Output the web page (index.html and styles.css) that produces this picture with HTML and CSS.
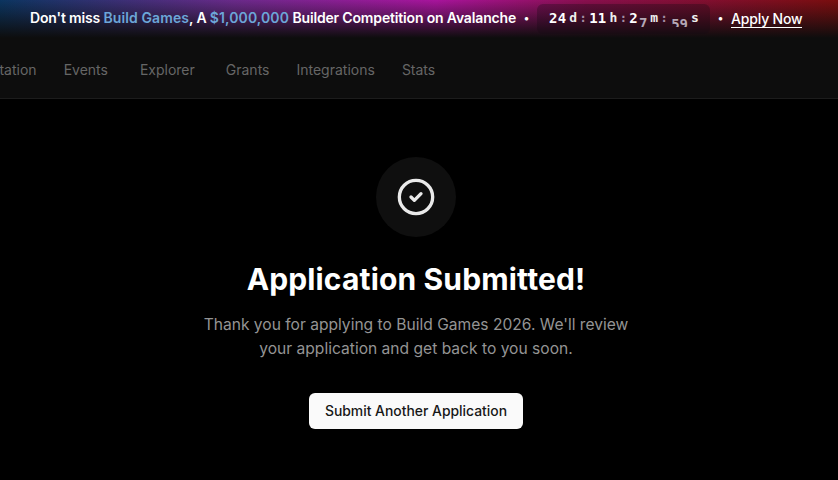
FILE: index.html
```html
<!DOCTYPE html>
<html lang="en">
<head>
<meta charset="utf-8">
<title>Application Submitted</title>
<link rel="stylesheet" href="styles.css">
</head>
<body>
<div class="banner">
  <span class="banner-text">Don't miss <b class="hl">Build Games</b>, A <b class="hl">$1,000,000</b> Builder Competition on Avalanche</span>
  <span class="dot">•</span>
  <div class="timer">
    <span class="num">24</span><span class="unit">d</span><span class="sep">:</span>
    <span class="num">11</span><span class="unit">h</span><span class="sep">:</span>
    <span class="num">2</span><span class="roll roll-one"><span class="roll-digits">7</span></span><span class="unit">m</span><span class="sep">:</span>
    <span class="roll roll-two"><span class="roll-digits">59</span></span><span class="unit">s</span>
  </div>
  <span class="dot">•</span>
  <a class="apply">Apply Now</a>
</div>
<nav class="nav">
  <a class="nav-item first">Documentation</a>
  <a class="nav-item events">Events</a>
  <a class="nav-item explorer">Explorer</a>
  <a class="nav-item grants">Grants</a>
  <a class="nav-item integrations">Integrations</a>
  <a class="nav-item stats">Stats</a>
</nav>
<main class="main">
  <div class="badge">
    <svg class="check" width="40" height="40" viewBox="0 0 24 24" fill="none" stroke="#eaeaea" stroke-width="2" stroke-linecap="round" stroke-linejoin="round">
      <circle cx="12" cy="12" r="10"/>
      <path d="m9 12 2 2 4-4"/>
    </svg>
  </div>
  <h1 class="title">Application Submitted!</h1>
  <p class="desc">Thank you for applying to Build Games 2026. We'll review your application and get back to you soon.</p>
  <button class="btn">Submit Another Application</button>
</main>
</body>
</html>
```
FILE: styles.css
```css
* { box-sizing: border-box; }
html, body { margin: 0; height: 100%; overflow: hidden; }
body { background: #000; color: #fafafa; font-family: Inter, "Liberation Sans", sans-serif; }

.banner {
  height: 40px;
  display: flex;
  align-items: flex-start;
  padding: 4px 0 0 30px;
  background:
    linear-gradient(180deg, rgba(13,13,13,0) 0%, rgba(13,13,13,.3) 30%, #0d0d0d 95%),
    linear-gradient(90deg, #0b3560 0%, #6a2a8a 28%, #a8149c 52%, #8a0f4e 70%, #7a0e0e 100%);
  font-size: 14px;
  font-weight: 600;
  color: #fff;
  white-space: nowrap;
}
.banner-text { line-height: 28px; letter-spacing: -.16px; }
.hl { font-weight: 600; color: #6ca6d8; letter-spacing: .1px; }
.dot { width: 21px; line-height: 28px; text-align: center; font-size: 11px; }
.timer {
  width: 173px;
  height: 30px;
  display: flex;
  align-items: flex-start;
  padding: 0 0 0 12px;
  border-radius: 6px;
  background: rgba(20,10,20,.3);
  font-family: "DejaVu Sans Mono", monospace;
  overflow: hidden;
}
.num { font-size: 14px; font-weight: 700; line-height: 28px; letter-spacing: .2px; }
.unit { font-size: 13px; font-weight: 700; line-height: 27px; margin-left: 3px; color: #eee; }
.sep { font-size: 12px; line-height: 28px; width: 11px; margin: 0 .5px; text-align: center; color: #a58fa5; }
.roll { height: 23px; margin-left: 1px; overflow: hidden; color: #b5a8b5; font-size: 14px; font-weight: 700; line-height: 28px; }
.roll-digits { display: block; }
.roll-one .roll-digits { margin-top: 5px; }
.roll-two .roll-digits { margin-top: 6px; }
.apply { line-height: 17px; margin-top: 6px; border-bottom: 1px solid #fff; font-weight: 500; letter-spacing: -.2px; }

.nav {
  height: 59px;
  display: flex;
  align-items: center;
  background: #0d0d0d;
  border-bottom: 1px solid #1c1c1c;
  overflow: hidden;
  font-size: 14px;
  color: #666;
  white-space: nowrap;
}
.nav-item { flex: none; }
.first { margin-left: -64px; }
.events { margin-left: 27px; }
.explorer { margin-left: 32px; }
.grants { margin-left: 31px; }
.integrations { margin-left: 27px; }
.stats { margin-left: 27px; }

.main { display: flex; flex-direction: column; align-items: center; padding: 58px 6px 0 0; }
.badge { width: 80px; height: 80px; border-radius: 50%; background: #0f0f0f; display: flex; align-items: center; justify-content: center; }
.title { margin: 24px 0 0; font-size: 30px; line-height: 36px; font-weight: 700; color: #fff; letter-spacing: .15px; }
.desc { margin: 16px 0 0; width: 448px; text-align: center; font-size: 15.6px; line-height: 24px; color: #949494; }
.btn { margin-top: 32px; width: 214px; height: 36px; border: 0; border-radius: 6px; background: #fafafa; color: #171717; font: 450 13.9px Inter, "Liberation Sans", sans-serif; }
```
